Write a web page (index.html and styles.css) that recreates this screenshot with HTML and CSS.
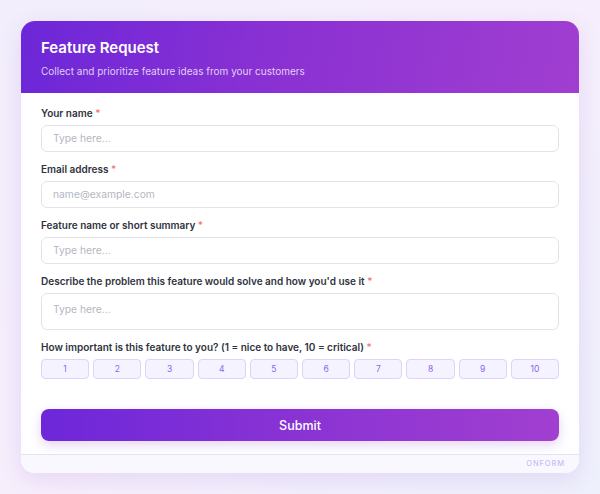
FILE: index.html
```html
<!DOCTYPE html>
<html>
<head>
<meta charset="utf-8">
<link rel="stylesheet" href="styles.css">
</head>
<body>
<div class="card">
  <div class="header">
    <div class="title">Feature Request</div>
    <div class="subtitle">Collect and prioritize feature ideas from your customers</div>
  </div>
  <div class="form">
    <div class="field">
      <div class="label">Your name <span class="req">*</span></div>
      <div class="input">Type here...</div>
    </div>
    <div class="field">
      <div class="label">Email address <span class="req">*</span></div>
      <div class="input">name@example.com</div>
    </div>
    <div class="field">
      <div class="label">Feature name or short summary <span class="req">*</span></div>
      <div class="input">Type here...</div>
    </div>
    <div class="field">
      <div class="label">Describe the problem this feature would solve and how you'd use it <span class="req">*</span></div>
      <div class="input textarea">Type here...</div>
    </div>
    <div class="field">
      <div class="label">How important is this feature to you? (1 = nice to have, 10 = critical) <span class="req">*</span></div>
      <div class="scale">
        <div class="opt">1</div><div class="opt">2</div><div class="opt">3</div><div class="opt">4</div><div class="opt">5</div>
        <div class="opt">6</div><div class="opt">7</div><div class="opt">8</div><div class="opt">9</div><div class="opt">10</div>
      </div>
    </div>
    <div class="submit">Submit</div>
  </div>
  <div class="footer">ONFORM</div>
</div>
</body>
</html>
```
FILE: styles.css
```css
* { box-sizing: border-box; }
html, body { margin: 0; height: 100%; }
body {
  font-family: Inter, "Noto Sans", sans-serif;
  background: linear-gradient(135deg, #f2eefb 0%, #f7eefc 50%, #eef0fc 100%);
  padding: 21px;
}
.card {
  width: 558px;
  height: 452px;
  background: #fff;
  border-radius: 14px;
  overflow: hidden;
  box-shadow: 0 6px 22px rgba(120, 80, 200, 0.14);
  display: flex;
  flex-direction: column;
}
.header {
  height: 72px;
  padding: 17px 20px 0;
  background: linear-gradient(100deg, #6c27d8 0%, #8a31d3 45%, #a03ed0 100%);
  color: #fff;
}
.title {
  font-size: 15px;
  font-weight: 600;
  line-height: 20px;
}
.subtitle {
  margin-top: 6px;
  font-size: 10px;
  line-height: 14px;
  color: rgba(255,255,255,0.78);
}
.form {
  flex: 1;
  padding: 13px 20px 0;
  display: flex;
  flex-direction: column;
}
.field { display: flex; flex-direction: column; margin-bottom: 10px; }
.label {
  font-size: 10px;
  font-weight: 600;
  line-height: 14px;
  color: #2f3340;
  margin-bottom: 5px;
}
.req { color: #f37373; font-weight: 500; }
.input {
  height: 27px;
  border: 1.5px solid #e3e1ea;
  border-radius: 6px;
  padding: 0 11px;
  font-size: 10.3px;
  line-height: 24px;
  color: #b4b7c2;
}
.textarea { height: 37px; padding-top: 3px; }
.scale { display: flex; gap: 4px; }
.opt {
  flex: 1;
  height: 20px;
  border: 1px solid #ddd3fd;
  background: #f5f3ff;
  border-radius: 4px;
  font-size: 8.5px;
  line-height: 18px;
  text-align: center;
  color: #8f63f0;
}
.submit {
  margin-top: 20px;
  height: 32px;
  border-radius: 8px;
  background: linear-gradient(90deg, #6d27d9 0%, #8a33d4 50%, #a13fd0 100%);
  color: #fff;
  font-size: 12.5px;
  font-weight: 500;
  line-height: 33px;
  text-align: center;
  box-shadow: 0 4px 12px rgba(130, 60, 210, 0.22);
}
.footer {
  height: 19px;
  border-top: 1px solid #e6e3ee;
  background: #faf8ff;
  text-align: right;
  padding-right: 14px;
  font-size: 7.5px;
  font-weight: 500;
  letter-spacing: 0.9px;
  line-height: 18px;
  color: #c7bbf5;
}
```
